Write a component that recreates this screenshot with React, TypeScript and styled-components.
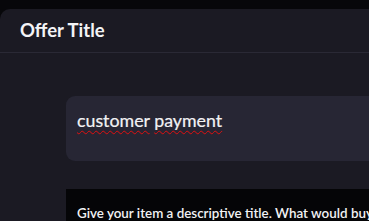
import React from "react";
import styled, { createGlobalStyle } from "styled-components";

const GlobalStyle = createGlobalStyle`
  html, body {
    margin: 0;
    padding: 0;
    background: #07070a;
    font-family: Lato, "Open Sans", sans-serif;
    overflow: hidden;
  }
`;

const Page = styled.div`
  width: 369px;
  height: 221px;
  padding-top: 9px;
  box-sizing: border-box;
  overflow: hidden;
`;

const Panel = styled.div`
  width: 420px;
  height: 100%;
  background: #1b1a23;
  border-top-left-radius: 10px;
  display: flex;
  flex-direction: column;
`;

const Header = styled.div`
  height: 44px;
  padding-left: 20px;
  display: flex;
  align-items: center;
  border-bottom: 1px solid #2a2935;
  box-sizing: border-box;
  flex-shrink: 0;
`;

const Title = styled.h2`
  margin: 0;
  color: #f4f4f6;
  font-size: 18.5px;
  font-weight: 700;
  padding-bottom: 1px;
`;

const Body = styled.div`
  padding: 43px 0 0 66px;
  display: flex;
  flex-direction: column;
  gap: 28px;
`;

const InputBox = styled.div`
  height: 65px;
  background: #272634;
  border-radius: 9px 0 0 9px;
  padding: 13px 11px;
  box-sizing: border-box;
  color: #f2f2f4;
  font-size: 17.8px;
  line-height: 22px;
  white-space: nowrap;
  -webkit-text-stroke: 0.2px #f2f2f4;
`;

const Misspelled = styled.span`
  text-decoration: underline wavy #e01010;
  text-decoration-thickness: 1px;
  text-underline-offset: 3px;
`;

const Hint = styled.div`
  background: #050507;
  padding: 16px 11px;
  color: #f2f2f4;
  font-size: 13.4px;
  font-weight: 600;
  white-space: nowrap;
`;

export default function App() {
  return (
    <>
      <GlobalStyle />
      <Page>
        <Panel>
          <Header>
            <Title>Offer Title</Title>
          </Header>
          <Body>
            <InputBox>
              <Misspelled>customer</Misspelled> <Misspelled>payment</Misspelled>
            </InputBox>
            <Hint>Give your item a descriptive title. What would buyers search for?</Hint>
          </Body>
        </Panel>
      </Page>
    </>
  );
}
